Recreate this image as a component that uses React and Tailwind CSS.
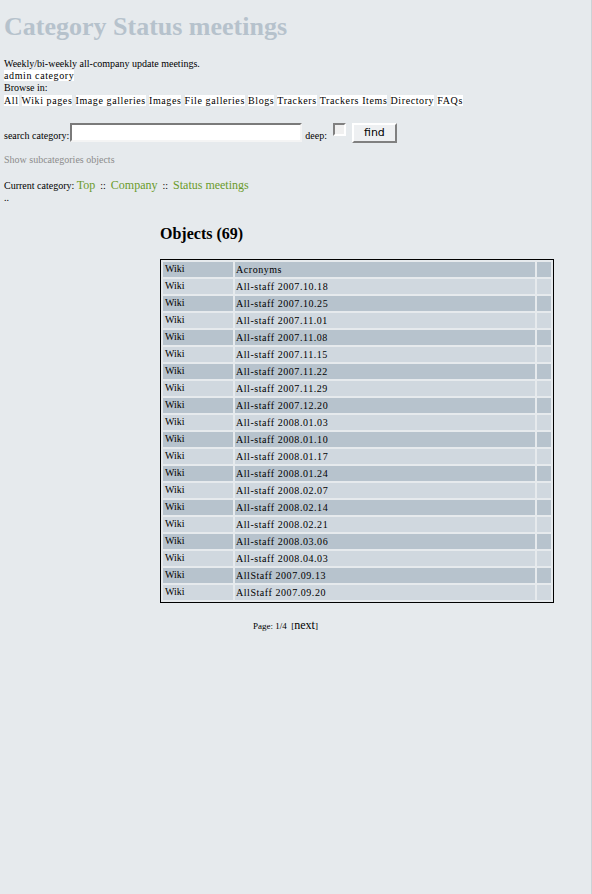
import React from 'react';

const browse = [
  'All',
  'Wiki pages',
  'Image galleries',
  'Images',
  'File galleries',
  'Blogs',
  'Trackers',
  'Trackers Items',
  'Directory',
  'FAQs',
];

const objects = [
  'Acronyms',
  'All-staff 2007.10.18',
  'All-staff 2007.10.25',
  'All-staff 2007.11.01',
  'All-staff 2007.11.08',
  'All-staff 2007.11.15',
  'All-staff 2007.11.22',
  'All-staff 2007.11.29',
  'All-staff 2007.12.20',
  'All-staff 2008.01.03',
  'All-staff 2008.01.10',
  'All-staff 2008.01.17',
  'All-staff 2008.01.24',
  'All-staff 2008.02.07',
  'All-staff 2008.02.14',
  'All-staff 2008.02.21',
  'All-staff 2008.03.06',
  'All-staff 2008.04.03',
  'AllStaff 2007.09.13',
  'AllStaff 2007.09.20',
];

const serif = "font-['Liberation_Serif',serif]";

function Crumb({ children }) {
  return <a className="text-[12px] text-[#6a9a2a]">{children}</a>;
}

export default function App() {
  return (
    <div className={`min-h-[894px] w-full bg-[#e6eaed] border-r border-[#cdd2d6] text-black ${serif}`}>
      <div className="pl-[4px] pt-[12px]">
        <h1 className="text-[26px] font-bold leading-[30px] text-[#b6c2cc]">Category Status meetings</h1>

        <div className="mt-[16px] text-[10px] leading-[12px]">Weekly/bi-weekly all-company update meetings.</div>
        <div className="text-[10px] leading-[12px] tracking-[0.6px]">
          <span className="bg-white">admin category</span>
        </div>
        <div className="text-[10px] leading-[12px]">Browse in:</div>
        <div className="text-[10px] leading-[13px] tracking-[0.6px]">
          {browse.map((b, i) => (
            <React.Fragment key={b}>
              {i > 0 && ' '}
              <a className="bg-white">{b}</a>
            </React.Fragment>
          ))}
        </div>

        <div className="mt-[16px] flex items-start text-[10px]">
          <span className="mt-[5px]">search category:</span>
          <input
            type="text"
            className="ml-[1px] h-[19px] w-[232px] border-2 border-t-[#7a7a7a] border-l-[#7a7a7a] border-b-[#f4f4f4] border-r-[#f4f4f4] bg-white"
          />
          <span className="ml-[3px] mt-[5px]">deep:</span>
          <span className="ml-[6px] h-[13px] w-[13px] border-2 border-t-[#808080] border-l-[#808080] border-b-white border-r-white bg-[#f0f0f0]" />
          <button className="ml-[6px] h-[20px] w-[45px] border-2 border-t-white border-l-white border-b-[#808080] border-r-[#808080] bg-[#eef0f2] font-['DejaVu_Sans',sans-serif] text-[11px] leading-[14px]">
            find
          </button>
        </div>

        <div className="mt-[10px] text-[10px] leading-[13px] text-[#8c8c8c]">Show subcategories objects</div>

        <div className="mt-[12px] text-[10px] leading-[14px]">
          Current category: <Crumb>Top</Crumb> &nbsp;::&nbsp; <Crumb>Company</Crumb> &nbsp;::&nbsp;{' '}
          <Crumb>Status meetings</Crumb>
        </div>
        <div className="text-[10px] leading-[10px]">..</div>
      </div>

      <div className="pl-[160px] pt-[21px]">
        <h2 className="text-[16px] font-bold leading-[20px]">Objects (69)</h2>

        <table className="mt-[15px] w-[394px] table-fixed border-separate border-spacing-[2px] border border-black text-[10px]">
          <colgroup>
            <col className="w-[70px]" />
            <col className="w-[300px]" />
            <col className="w-[14px]" />
          </colgroup>
          <tbody>
            {objects.map((name, i) => {
              const bg = i % 2 === 0 ? 'bg-[#b7c3cd]' : 'bg-[#d0d8df]';
              return (
                <tr key={name} className="h-[15px]">
                  <td className={`${bg} h-[15px] px-[2px] py-0 align-top leading-[13px]`}>Wiki</td>
                  <td className={`${bg} h-[15px] px-[1px] py-0 align-top leading-[15px] tracking-[0.55px]`}>{name}</td>
                  <td className={`${bg} h-[15px] p-0`} />
                </tr>
              );
            })}
          </tbody>
        </table>
      </div>

      <div className="pl-[253px] pt-[14px] text-[9px] leading-[16px]">
        Page: 1/4 &nbsp;[<a className="text-[12px]">next</a>]
      </div>
    </div>
  );
}
